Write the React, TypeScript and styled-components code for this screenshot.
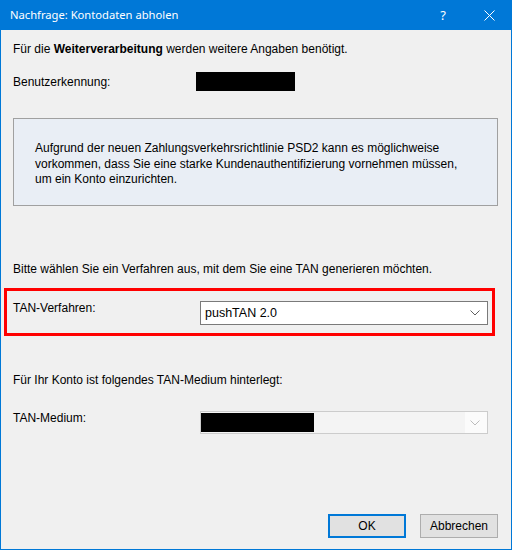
import React from "react";
import styled, { createGlobalStyle } from "styled-components";

const Global = createGlobalStyle`
  html, body { margin: 0; padding: 0; background: #f0f0f0; }
  #root { width: 512px; height: 550px; }
`;

const Window = styled.div`
  width: 512px;
  height: 550px;
  box-sizing: border-box;
  border: 1px solid #0078d7;
  border-top: none;
  display: flex;
  flex-direction: column;
  background: #f0f0f0;
  font-family: "Liberation Sans", Arial, sans-serif;
  font-size: 12px;
  color: #000;
`;

const TitleBar = styled.div`
  height: 30px;
  margin: 0 -1px;
  background: #0078d7;
  color: #fff;
  display: flex;
  align-items: center;
  padding-left: 10px;
  font-family: "Noto Sans", "Open Sans", sans-serif;
  font-size: 11.2px;
  flex: none;
`;

const Title = styled.div`
  flex: 1;
  padding-bottom: 1px;
`;

const TitleButton = styled.div`
  width: 46px;
  height: 30px;
  display: flex;
  align-items: center;
  justify-content: center;
  font-family: "Noto Sans", sans-serif;
  font-size: 13px;
`;

const Body = styled.div`
  flex: 1;
  display: flex;
  flex-direction: column;
  padding: 11px 13px 11px 12px;
`;

const Line = styled.div<{ $mt: number }>`
  margin-top: ${(p) => p.$mt}px;
  line-height: 16px;
  height: 16px;
  white-space: nowrap;
`;

const Row = styled.div<{ $mt: number; $label: number }>`
  margin-top: ${(p) => p.$mt}px;
  display: grid;
  grid-template-columns: ${(p) => p.$label}px auto;
  align-items: start;
`;

const Label = styled.div<{ $top?: number }>`
  line-height: 16px;
  margin-top: ${(p) => p.$top ?? 0}px;
`;

const Redacted = styled.div<{ $w: number; $h: number }>`
  width: ${(p) => p.$w}px;
  height: ${(p) => p.$h}px;
  background: #000;
`;

const InfoBox = styled.div`
  margin-top: 27px;
  height: 88px;
  box-sizing: border-box;
  border: 1px solid #a0a0a0;
  background: #e9eef5;
  padding: 22px 20px 0 21px;
  line-height: 15.5px;
`;

const Highlight = styled.div`
  margin: 11px 0 0 -9px;
  width: 491px;
  height: 48px;
  box-sizing: border-box;
  border: 3px solid #ff0000;
  padding: 10px 0 0 6px;
  display: grid;
  grid-template-columns: 187px 288px;
  align-items: start;
`;

const Select = styled.div<{ $disabled?: boolean }>`
  width: 288px;
  height: ${(p) => (p.$disabled ? 23 : 24)}px;
  box-sizing: border-box;
  border: 1px solid ${(p) => (p.$disabled ? "#cccccc" : "#7a7a7a")};
  background: ${(p) => (p.$disabled ? "#f4f4f4" : "#ffffff")};
  display: flex;
  align-items: center;
  font-size: 12.5px;
`;

const SelectText = styled.div`
  flex: 1;
  padding-left: 4px;
  line-height: 16px;
`;

const SelectValue = styled.div`
  flex: 1;
  display: flex;
  align-items: center;
`;

const Arrow = styled.div<{ $disabled?: boolean }>`
  width: 20px;
  align-self: stretch;
  display: flex;
  align-items: center;
  justify-content: center;
  background: ${(p) => (p.$disabled ? "#fbfbfb" : "transparent")};
  padding-right: 2px;
`;

const Buttons = styled.div`
  margin-top: auto;
  display: flex;
  justify-content: flex-end;
  gap: 14px;
`;

const Button = styled.div<{ $default?: boolean }>`
  width: 78px;
  height: 24px;
  box-sizing: border-box;
  border: ${(p) => (p.$default ? "2px solid #0078d7" : "1px solid #adadad")};
  background: #e1e1e1;
  display: flex;
  align-items: center;
  justify-content: center;
  font-size: 12px;
`;

const Chevron = ({ color }: { color: string }) => (
  <svg width="10" height="6" viewBox="0 0 10 6">
    <path d="M0.5 0.5 L5 5 L9.5 0.5" fill="none" stroke={color} strokeWidth="1" />
  </svg>
);

export default function App() {
  return (
    <>
      <Global />
      <Window>
        <TitleBar>
          <Title>Nachfrage: Kontodaten abholen</Title>
          <TitleButton>?</TitleButton>
          <TitleButton>
            <svg width="11" height="11" viewBox="0 0 11 11">
              <path d="M0.5 0.5 L10.5 10.5 M10.5 0.5 L0.5 10.5" stroke="#fff" strokeWidth="1" />
            </svg>
          </TitleButton>
        </TitleBar>
        <Body>
          <Line $mt={0}>
            Für die <b>Weiterverarbeitung</b> werden weitere Angaben benötigt.
          </Line>
          <Row $mt={15} $label={183}>
            <Label $top={2}>Benutzerkennung:</Label>
            <Redacted $w={99} $h={19} />
          </Row>
          <InfoBox>
            Aufgrund der neuen Zahlungsverkehrsrichtlinie PSD2 kann es möglichweise
            <br />
            vorkommen, dass Sie eine starke Kundenauthentifizierung vornehmen müssen,
            <br />
            um ein Konto einzurichten.
          </InfoBox>
          <Line $mt={55}>Bitte wählen Sie ein Verfahren aus, mit dem Sie eine TAN generieren möchten.</Line>
          <Highlight>
            <Label $top={-1}>TAN-Verfahren:</Label>
            <Select>
              <SelectText>pushTAN 2.0</SelectText>
              <Arrow>
                <Chevron color="#606060" />
              </Arrow>
            </Select>
          </Highlight>
          <Line $mt={36}>Für Ihr Konto ist folgendes TAN-Medium hinterlegt:</Line>
          <Row $mt={23} $label={187}>
            <Label $top={-1}>TAN-Medium:</Label>
            <Select $disabled>
              <SelectValue>
                <Redacted $w={113} $h={19} />
              </SelectValue>
              <Arrow $disabled>
                <Chevron color="#bcbcbc" />
              </Arrow>
            </Select>
          </Row>
          <Buttons>
            <Button $default>OK</Button>
            <Button>Abbrechen</Button>
          </Buttons>
        </Body>
      </Window>
    </>
  );
}
